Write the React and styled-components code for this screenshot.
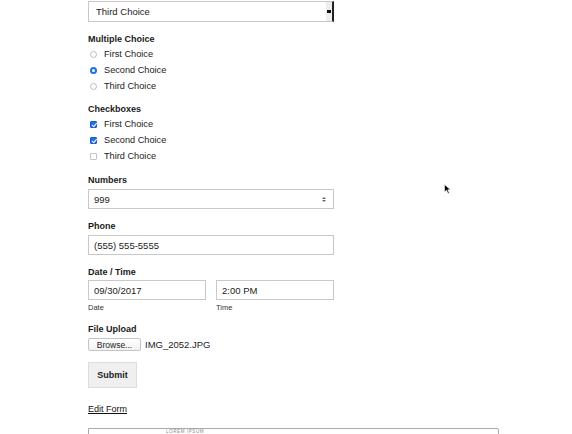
import React from 'react';
import styled, { createGlobalStyle } from 'styled-components';

const GlobalStyle = createGlobalStyle`
  html, body {
    margin: 0;
    padding: 0;
    background: #fff;
    overflow: hidden;
    font-family: "Liberation Sans", Arial, sans-serif;
    color: #222;
  }
`;

const Page = styled.div`
  position: relative;
  width: 572px;
  height: 434px;
  overflow: hidden;
  padding: 1px 0 0 88px;
  box-sizing: border-box;
`;

const Form = styled.form`
  width: 246px;
  display: flex;
  flex-direction: column;
`;

const Group = styled.div`
  display: flex;
  flex-direction: column;
  margin-bottom: ${p => p.$mb ?? 11}px;
`;

const Label = styled.div`
  font-size: 9px;
  font-weight: bold;
  line-height: 12px;
  margin-bottom: ${p => p.$mb ?? 3}px;
  color: #1a1a1a;
`;

const SelectBox = styled.div`
  height: 21px;
  border: 1px solid #c8c8c8;
  border-right: 2px solid #222;
  box-sizing: border-box;
  display: flex;
  align-items: center;
  font-size: 9.5px;
  margin-bottom: 11px;
`;

const SelectText = styled.span`
  flex: 1;
  padding-left: 7px;
`;

const SelectStepper = styled.span`
  width: 6px;
  align-self: stretch;
  background: #eee;
  display: flex;
  align-items: center;
  justify-content: center;
`;

const Option = styled.label`
  display: flex;
  align-items: center;
  height: 16px;
  font-size: 9.2px;
  padding-left: 2px;
`;

const Radio = styled.input.attrs({ type: 'radio' })`
  appearance: none;
  margin: 0 7px 0 0;
  width: 7px;
  height: 7px;
  border-radius: 50%;
  border: 1px solid #bbb;
  background: #fff;
  box-sizing: border-box;
  &:checked {
    border: 2px solid #1a73e8;
    background: #fff;
    box-shadow: inset 0 0 0 1px #fff;
  }
`;

const Check = styled.input.attrs({ type: 'checkbox' })`
  appearance: none;
  margin: 0 7px 0 0;
  width: 7px;
  height: 7px;
  border-radius: 1px;
  border: 1px solid #c4c4c4;
  background: #fff;
  box-sizing: border-box;
  position: relative;
  &:checked {
    border-color: #1a5fd0;
    background: #2a6fe0;
  }
  &:checked::after {
    content: '';
    position: absolute;
    left: 1.5px;
    top: 0;
    width: 2px;
    height: 3.5px;
    border: solid #fff;
    border-width: 0 1px 1px 0;
    transform: rotate(40deg);
  }
`;

const Field = styled.div`
  height: 20px;
  width: ${p => p.$w || 246}px;
  border: 1px solid #c8c8c8;
  box-sizing: border-box;
  display: flex;
  align-items: center;
  font-size: 9.5px;
  padding: 0 7px 0 5px;
`;

const FieldText = styled.span`
  flex: 1;
`;

const Row = styled.div`
  display: flex;
  gap: 10px;
`;

const Col = styled.div`
  display: flex;
  flex-direction: column;
`;

const Sub = styled.span`
  font-size: 7.5px;
  line-height: 9px;
  margin-top: 3px;
  color: #333;
`;

const FileRow = styled.div`
  display: flex;
  align-items: center;
  font-size: 9.5px;
  gap: 4px;
`;

const BrowseButton = styled.span`
  height: 13px;
  width: 53px;
  box-sizing: border-box;
  border: 1px solid #c4c4c4;
  border-radius: 2px;
  background: linear-gradient(#fff, #f2f2f2);
  display: flex;
  align-items: center;
  justify-content: center;
  font-size: 8.5px;
  color: #222;
`;

const SubmitButton = styled.button`
  width: 49px;
  height: 26px;
  background: #efefef;
  border: 1px solid #ddd;
  font-family: inherit;
  font-weight: bold;
  font-size: 9px;
  color: #222;
  padding: 0;
  margin: 11px 0 15px;
  align-self: flex-start;
`;

const EditLink = styled.a`
  font-size: 9px;
  line-height: 12px;
  color: #111;
  text-decoration: underline;
  align-self: flex-start;
  margin-bottom: 13px;
`;

const Preview = styled.div`
  width: 411px;
  height: 40px;
  border: 1px solid #aaa;
  border-top-right-radius: 2px;
  padding: 1px 0 0 77px;
  box-sizing: border-box;
  font-size: 4.5px;
  line-height: 4px;
  letter-spacing: 0.6px;
  color: #888;
`;

const Cursor = styled.svg`
  position: absolute;
  left: 444px;
  top: 184px;
`;

const Spinner = () => (
  <svg width="4" height="7" viewBox="0 0 4 7">
    <path d="M0 3 L2 1 L4 3 Z M0 4 L2 6 L4 4 Z" fill="#666" />
  </svg>
);

export default function App() {
  return (
    <>
      <GlobalStyle />
      <Page>
        <Form>
          <SelectBox>
            <SelectText>Third Choice</SelectText>
            <SelectStepper>
              <svg width="4" height="3" viewBox="0 0 4 3">
                <rect x="0" y="0" width="4" height="3" fill="#111" />
              </svg>
            </SelectStepper>
          </SelectBox>

          <Group $mb={9}>
            <Label $mb={1}>Multiple Choice</Label>
            <Option><Radio name="mc" />First Choice</Option>
            <Option><Radio name="mc" defaultChecked />Second Choice</Option>
            <Option><Radio name="mc" />Third Choice</Option>
          </Group>

          <Group $mb={10}>
            <Label $mb={1}>Checkboxes</Label>
            <Option><Check defaultChecked />First Choice</Option>
            <Option><Check defaultChecked />Second Choice</Option>
            <Option><Check />Third Choice</Option>
          </Group>

          <Group>
            <Label>Numbers</Label>
            <Field>
              <FieldText>999</FieldText>
              <Spinner />
            </Field>
          </Group>

          <Group>
            <Label>Phone</Label>
            <Field><FieldText>(555) 555-5555</FieldText></Field>
          </Group>

          <Group>
            <Label $mb={2}>Date / Time</Label>
            <Row>
              <Col>
                <Field $w={118}><FieldText>09/30/2017</FieldText></Field>
                <Sub>Date</Sub>
              </Col>
              <Col>
                <Field $w={118}><FieldText>2:00 PM</FieldText></Field>
                <Sub>Time</Sub>
              </Col>
            </Row>
          </Group>

          <Group $mb={0}>
            <Label>File Upload</Label>
            <FileRow>
              <BrowseButton>Browse...</BrowseButton>
              <span>IMG_2052.JPG</span>
            </FileRow>
          </Group>

          <SubmitButton type="button">Submit</SubmitButton>

          <EditLink href="#">Edit Form</EditLink>

          <Preview>LOREM IPSUM</Preview>
        </Form>
        <Cursor width="8" height="11" viewBox="0 0 8 11">
          <path d="M0.5 0.5 L0.5 8 L2.5 6.2 L4 9.5 L5.3 9 L3.8 5.8 L6.5 5.8 Z" fill="#000" stroke="#fff" strokeWidth="0.6" />
        </Cursor>
      </Page>
    </>
  );
}
